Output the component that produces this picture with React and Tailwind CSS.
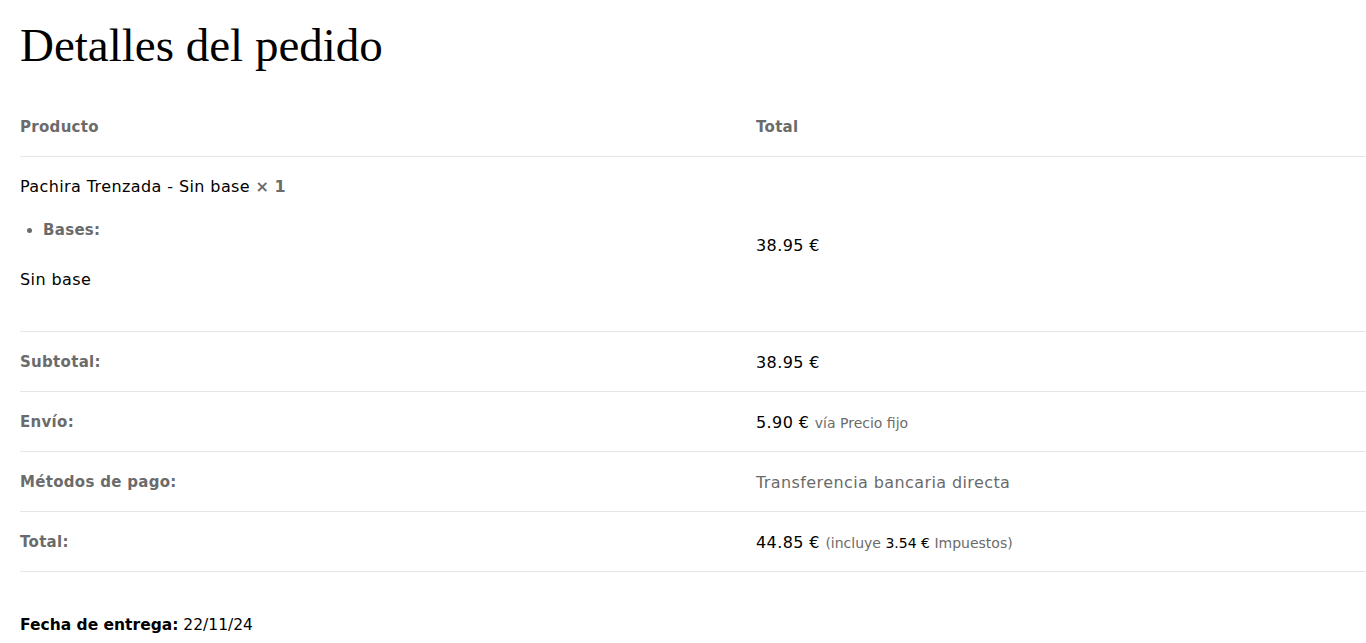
export default function App() {
  const sans = "font-['DejaVu_Sans',sans-serif]";
  const th = "pt-[3px] text-left align-middle font-bold text-[#6b6b6b] text-[15px] tracking-[0.3px]";
  const td = "pt-[3px] align-middle";
  return (
    <div className={`bg-white min-h-screen pl-5 text-[16px] tracking-[0.4px] text-black ${sans}`}>
      <h1 className="pt-[17px] font-['Liberation_Serif',serif] text-[47px] leading-[56px] tracking-normal text-black">
        Detalles del pedido
      </h1>

      <table className="mt-[23px] w-full border-collapse">
        <thead>
          <tr className="h-[60px] border-b border-[#e6e6e6]">
            <th className={`${th} w-[736px]`}>Producto</th>
            <th className={th}>Total</th>
          </tr>
        </thead>
        <tbody>
          <tr className="border-b border-[#e6e6e6]">
            <td className="pt-[17px] pb-[39px] align-top">
              <div className="leading-[25px]">
                Pachira Trenzada - Sin base <strong className="text-[#6b6b6b] tracking-normal">× 1</strong>
              </div>
              <ul className="mt-[19px] list-disc pl-[23px] marker:text-[#6b6b6b]">
                <li className="font-bold text-[15px] tracking-[0.3px] text-[#6b6b6b] leading-[25px]">Bases:</li>
              </ul>
              <p className="mt-6 leading-[25px]">Sin base</p>
            </td>
            <td className="pt-[5px] align-middle">38.95&nbsp;€</td>
          </tr>
          <tr className="h-[60px] border-b border-[#e6e6e6]">
            <th className={th}>Subtotal:</th>
            <td className={td}>38.95&nbsp;€</td>
          </tr>
          <tr className="h-[60px] border-b border-[#e6e6e6]">
            <th className={th}>Envío:</th>
            <td className={td}>
              5.90&nbsp;€ <span className="text-[14px] tracking-normal text-[#6b6b6b]">vía Precio fijo</span>
            </td>
          </tr>
          <tr className="h-[60px] border-b border-[#e6e6e6]">
            <th className={th}>Métodos de pago:</th>
            <td className={`${td} text-[#6b6b6b]`}>Transferencia bancaria directa</td>
          </tr>
          <tr className="h-[60px] border-b border-[#e6e6e6]">
            <th className={th}>Total:</th>
            <td className={td}>
              44.85&nbsp;€{" "}
              <span className="text-[14px] tracking-normal text-[#6b6b6b]">
                (incluye <span className="text-black">3.54&nbsp;€</span> Impuestos)
              </span>
            </td>
          </tr>
        </tbody>
      </table>

      <p className="mt-[41px] text-[15.5px] tracking-normal leading-[25px]">
        <strong>Fecha de entrega:</strong> 22/11/24
      </p>
    </div>
  );
}
